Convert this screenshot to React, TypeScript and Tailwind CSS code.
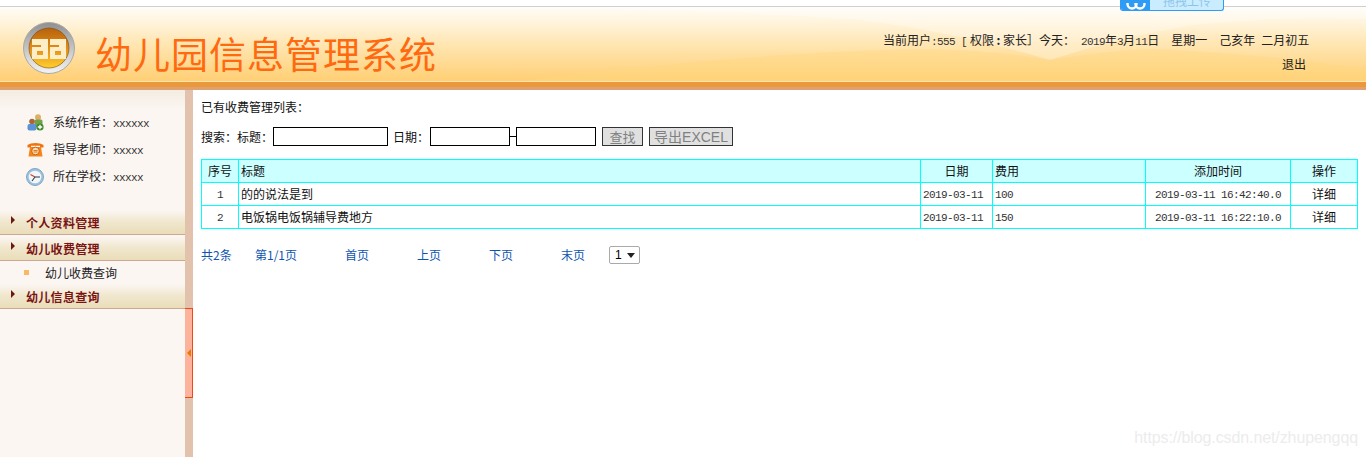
const cn = '"Noto Sans CJK SC", sans-serif';

function Num({ children }: { children: React.ReactNode }) {
	return <span className="font-['Liberation_Mono',monospace] text-[11px] tracking-[-0.6px] text-[#333]">{children}</span>;
}

function Logo() {
	return (
		<svg width="54" height="54" viewBox="0 0 54 54" className="shrink-0">
			<defs>
				<linearGradient id="ring" x1="0" y1="0" x2="0" y2="1">
					<stop offset="0" stopColor="#8f8f8f" />
					<stop offset="0.5" stopColor="#c4c4c4" />
					<stop offset="1" stopColor="#f4f4f4" />
				</linearGradient>
				<linearGradient id="core" x1="0" y1="0" x2="0" y2="1">
					<stop offset="0" stopColor="#b5620e" />
					<stop offset="0.5" stopColor="#e28c16" />
					<stop offset="1" stopColor="#ffcf2e" />
				</linearGradient>
			</defs>
			<circle cx="27" cy="27" r="25.5" fill="url(#ring)" stroke="#a9a9a9" />
			<circle cx="27" cy="27" r="20" fill="url(#core)" stroke="#7a4a14" strokeWidth="0.6" />
			<path
				fillRule="evenodd"
				fill="#fdeec8"
				d="M10 18H26V38H10V26H19V24H10ZM15 30V34H21V30ZM28 18H44V38H28V26H37V24H28ZM33 30V34H39V30Z"
			/>
		</svg>
	);
}

function PeopleIcon() {
	return (
		<svg width="17" height="17" viewBox="0 0 17 17">
			<circle cx="11" cy="3.2" r="3" fill="#e0ae62" />
			<rect x="7.5" y="5.5" width="8" height="7.5" rx="1.5" fill="#6fa24a" />
			<circle cx="5" cy="7.5" r="2.8" fill="#a8663a" />
			<rect x="0.5" y="10" width="9" height="6.5" rx="2" fill="#5b93d6" />
			<circle cx="13" cy="13" r="3.6" fill="#3f8a2c" />
			<path d="M10.8 13h4.4M13 10.8v4.4" stroke="#fff" strokeWidth="1.3" />
		</svg>
	);
}

function PhoneIcon() {
	return (
		<svg width="17" height="15" viewBox="0 0 17 15">
			<path d="M0.5 3C4 .2 13 .2 16.5 3v2.5h-3.5V3.8H4V5.5H.5z" fill="#ee7412" />
			<path d="M3 5h11l1.5 9.5h-14z" fill="#f3851c" />
			<circle cx="8.5" cy="9" r="3.8" fill="#fcdcaa" stroke="#d2600c" />
			<path d="M6.5 8.5h4M6.5 10h4" stroke="#d2600c" strokeWidth="0.8" />
		</svg>
	);
}

function ClockIcon() {
	return (
		<svg width="18" height="18" viewBox="0 0 18 18">
			<circle cx="9" cy="9" r="8.5" fill="#9dc2de" stroke="#7fa6c6" />
			<circle cx="9" cy="9" r="6.3" fill="#f3f6f8" />
			<path d="M9 9L4.5 6.5" stroke="#d04030" strokeWidth="1.2" />
			<path d="M9 9H14M9 9L6 13" stroke="#2f3d4a" strokeWidth="1.1" />
		</svg>
	);
}

function SideInfo({ icon, label, value }: { icon: React.ReactNode; label: string; value: string }) {
	return (
		<div className="flex h-[27px] items-center">
			<div className="flex w-[53px] justify-end pr-[9px]">{icon}</div>
			<span className="text-[12px] text-[#222]">
				{label}：<Num>{value}</Num>
			</span>
		</div>
	);
}

function MenuHead({ title }: { title: string }) {
	return (
		<div className="flex h-[24px] items-center border-b border-[#cfa595] bg-gradient-to-b from-[#faf5f0] via-[#f0e6cc] to-[#e9ddb9] pl-[11px]">
			<span className="mr-[11px] h-0 w-0 -translate-y-[3px] border-y-[4px] border-l-[4px] border-y-transparent border-l-[#6b1a10]" />
			<span className="text-[12px] font-bold tracking-[0.3px] text-[#7a1414]">{title}</span>
		</div>
	);
}

const cols = ['w-[37px]', 'w-[682px]', 'w-[72px]', 'w-[153px]', 'w-[145px]', 'w-[67px]'];
const rows = [
	{ id: 1, title: '的的说法是到', date: '2019-03-11', fee: '100', time: '2019-03-11 16:42:40.0' },
	{ id: 2, title: '电饭锅电饭锅辅导费地方', date: '2019-03-11', fee: '150', time: '2019-03-11 16:22:10.0' },
];

const cell = 'border border-[#00ffff] px-[2px] font-normal';

export default function App() {
	return (
		<div className="relative flex h-[457px] w-[1366px] flex-col overflow-hidden bg-white text-black" style={{ fontFamily: cn }}>
			{/* top strip */}
			<div className="h-[7px] shrink-0 border-b border-[#cfcfcf] bg-white" />

			{/* header */}
			<div className="relative flex h-[74px] shrink-0 items-start justify-between bg-gradient-to-b from-[#fffdf8] via-[#ffe6b2] to-[#ffcf73]">
				<svg className="absolute inset-0 h-full w-full" viewBox="0 0 1366 74" preserveAspectRatio="none">
					<path d="M560 0Q740 4 860 13Q950 24 1050 53Q1120 30 1193 18Q1280 9 1366 12V0z" fill="#fff" opacity="0.3" />
					<path d="M520 74Q760 44 930 42Q1000 44 1050 53Q1120 42 1150 42Q1260 46 1366 62V74z" fill="#ffd67e" opacity="0.4" />
				</svg>
				<div className="relative flex items-center pl-[22px] pt-[9px]">
					<Logo />
					<span className="ml-[19px] pt-[10px] text-[37px] leading-[54px] tracking-[1px] text-[#ff6a10]">幼儿园信息管理系统</span>
				</div>
				<div className="relative flex w-[483px] flex-col pr-[58px] pt-[26px] text-[12px] text-[#222]">
					<div className="h-[14px] whitespace-pre leading-[14px]">
						当前用户<Num>:555 [</Num>
						<span className="ml-[3px]">权限</span>
						<span className="inline-block w-[9px] text-center font-bold">:</span>家长］今天：<Num> 2019</Num>年<Num>3</Num>月<Num>11</Num>日
						<span className="ml-[12px]">星期一</span>
						<span className="ml-[12px]">己亥年</span>
						<span className="ml-[6px]">二月初五</span>
					</div>
					<div className="mt-[10px] self-end pr-[2px] leading-[14px]">退出</div>
				</div>
			</div>

			{/* orange band */}
			<div className="h-[9px] shrink-0 border-t border-[#ffe2b0] bg-[#e9983c]">
				<div className="mt-[5px] h-[3px] bg-[#e0a070]" />
			</div>

			<div className="flex min-h-0 flex-1">
				{/* sidebar */}
				<div className="w-[185px] shrink-0 bg-[#fbf6f2]">
					<div className="h-[19px] bg-gradient-to-b from-[#f3ece2] to-[#fbf6f2]" />
					<SideInfo icon={<PeopleIcon />} label="系统作者" value="xxxxxx" />
					<SideInfo icon={<PhoneIcon />} label="指导老师" value="xxxxx" />
					<SideInfo icon={<ClockIcon />} label="所在学校" value="xxxxx" />
					<div className="h-[21px]" />
					<MenuHead title="个人资料管理" />
					<div className="h-[2px]" />
					<MenuHead title="幼儿收费管理" />
					<div className="flex h-[24px] items-center pl-[24px] text-[12px] text-[#222]">
						<span className="mr-[16px] h-[5px] w-[5px] -translate-y-[1px] bg-[#f7b964]" />
						幼儿收费查询
					</div>
					<MenuHead title="幼儿信息查询" />
				</div>

				{/* splitter */}
				<div className="relative w-[8px] shrink-0 bg-[#e2c1ad]">
					<div className="absolute left-0 top-[218px] flex h-[90px] w-[8px] items-center justify-center border-y border-r border-[#f0481a] bg-[#fdb29b]">
						<span className="h-0 w-0 border-y-[4px] border-r-[4px] border-y-transparent border-r-[#e87a00]" />
					</div>
				</div>

				{/* main */}
				<div className="min-w-0 flex-1 pl-[8px] pr-[8px] text-[12px] text-[#111]">
					<div className="mt-[8px] flex h-[18px] items-center">已有收费管理列表：</div>

					<div className="mt-[11px] flex h-[19px] items-center">
						<span>搜索：标题：</span>
						<input className="h-[19px] w-[115px] border border-black bg-white" />
						<span className="ml-[5px] mr-[1px]">日期：</span>
						<input className="h-[19px] w-[80px] border border-black bg-white" />
						<span className="h-px w-[6px] bg-black" />
						<input className="h-[19px] w-[80px] border border-black bg-white" />
						<button className="ml-[6px] h-[19px] w-[41px] border border-[#333] bg-[#e0e0e0] text-[13px] leading-none text-[#808080]">查找</button>
						<button className="ml-[6px] h-[19px] w-[84px] border border-[#333] bg-[#e0e0e0] font-['Liberation_Sans','Noto_Sans_CJK_SC',sans-serif] text-[14px] leading-none text-[#808080]">导出EXCEL</button>
					</div>

					<table className="mt-[13px] w-[1157px] table-fixed border-collapse">
						<colgroup>
							{cols.map((c, i) => (
								<col key={i} className={c} />
							))}
						</colgroup>
						<thead>
							<tr className="h-[23px] bg-[#ccffff]">
								<th className={`${cell} text-center`}>序号</th>
								<th className={`${cell} text-left`}>标题</th>
								<th className={`${cell} text-center`}>日期</th>
								<th className={`${cell} text-left`}>费用</th>
								<th className={`${cell} text-center`}>添加时间</th>
								<th className={`${cell} text-center`}>操作</th>
							</tr>
						</thead>
						<tbody>
							{rows.map((r) => (
								<tr key={r.id} className="h-[23px]">
									<td className={`${cell} text-center`}>
										<Num>{r.id}</Num>
									</td>
									<td className={cell}>{r.title}</td>
									<td className={cell}>
										<Num>{r.date}</Num>
									</td>
									<td className={cell}>
										<Num>{r.fee}</Num>
									</td>
									<td className={`${cell} text-center`}>
										<Num>{r.time}</Num>
									</td>
									<td className={`${cell} text-center`}>详细</td>
								</tr>
							))}
						</tbody>
					</table>

					<div className="mt-[17px] flex h-[18px] items-center text-[#0f55b0]">
						<span className="w-[54px]">共2条</span>
						<span className="w-[90px]">第1/1页</span>
						<span className="w-[72px]">首页</span>
						<span className="w-[72px]">上页</span>
						<span className="w-[72px]">下页</span>
						<span className="w-[48px]">末页</span>
						<div className="flex h-[18px] w-[31px] items-center rounded-[2px] border border-[#aaa] bg-white pl-[5px] text-[12px] text-black">
							<span className="font-['Liberation_Sans',sans-serif]">1</span>
							<span className="ml-[5px] h-0 w-0 border-x-[4px] border-t-[5px] border-x-transparent border-t-[#222]" />
						</div>
					</div>
				</div>
			</div>

			{/* drag upload tab */}
			<div className="absolute left-[1120px] top-0 flex h-[11px] w-[104px] overflow-hidden rounded-b-[3px] border border-t-0 border-[#2e9bf5] bg-[#c9ecff]">
				<div className="flex w-[29px] items-end justify-center bg-[#2e9bf5]">
					<svg width="20" height="7" viewBox="0 0 20 7">
						<circle cx="6" cy="1" r="4.5" fill="none" stroke="#fff" strokeWidth="2.4" />
						<circle cx="14" cy="1" r="4.5" fill="none" stroke="#fff" strokeWidth="2.4" />
					</svg>
				</div>
				<div className="-mt-[5px] flex-1 pl-[13px] text-[12px] leading-[12px] text-[#8fc4ea]">拖拽上传</div>
			</div>

			{/* watermark */}
			<div className="absolute bottom-[10px] right-[8px] font-['Liberation_Sans',sans-serif] text-[16px] leading-[18px] tracking-[-0.1px] text-[#ececec]">https://blog.csdn.net/zhupengqq</div>
		</div>
	);
}
